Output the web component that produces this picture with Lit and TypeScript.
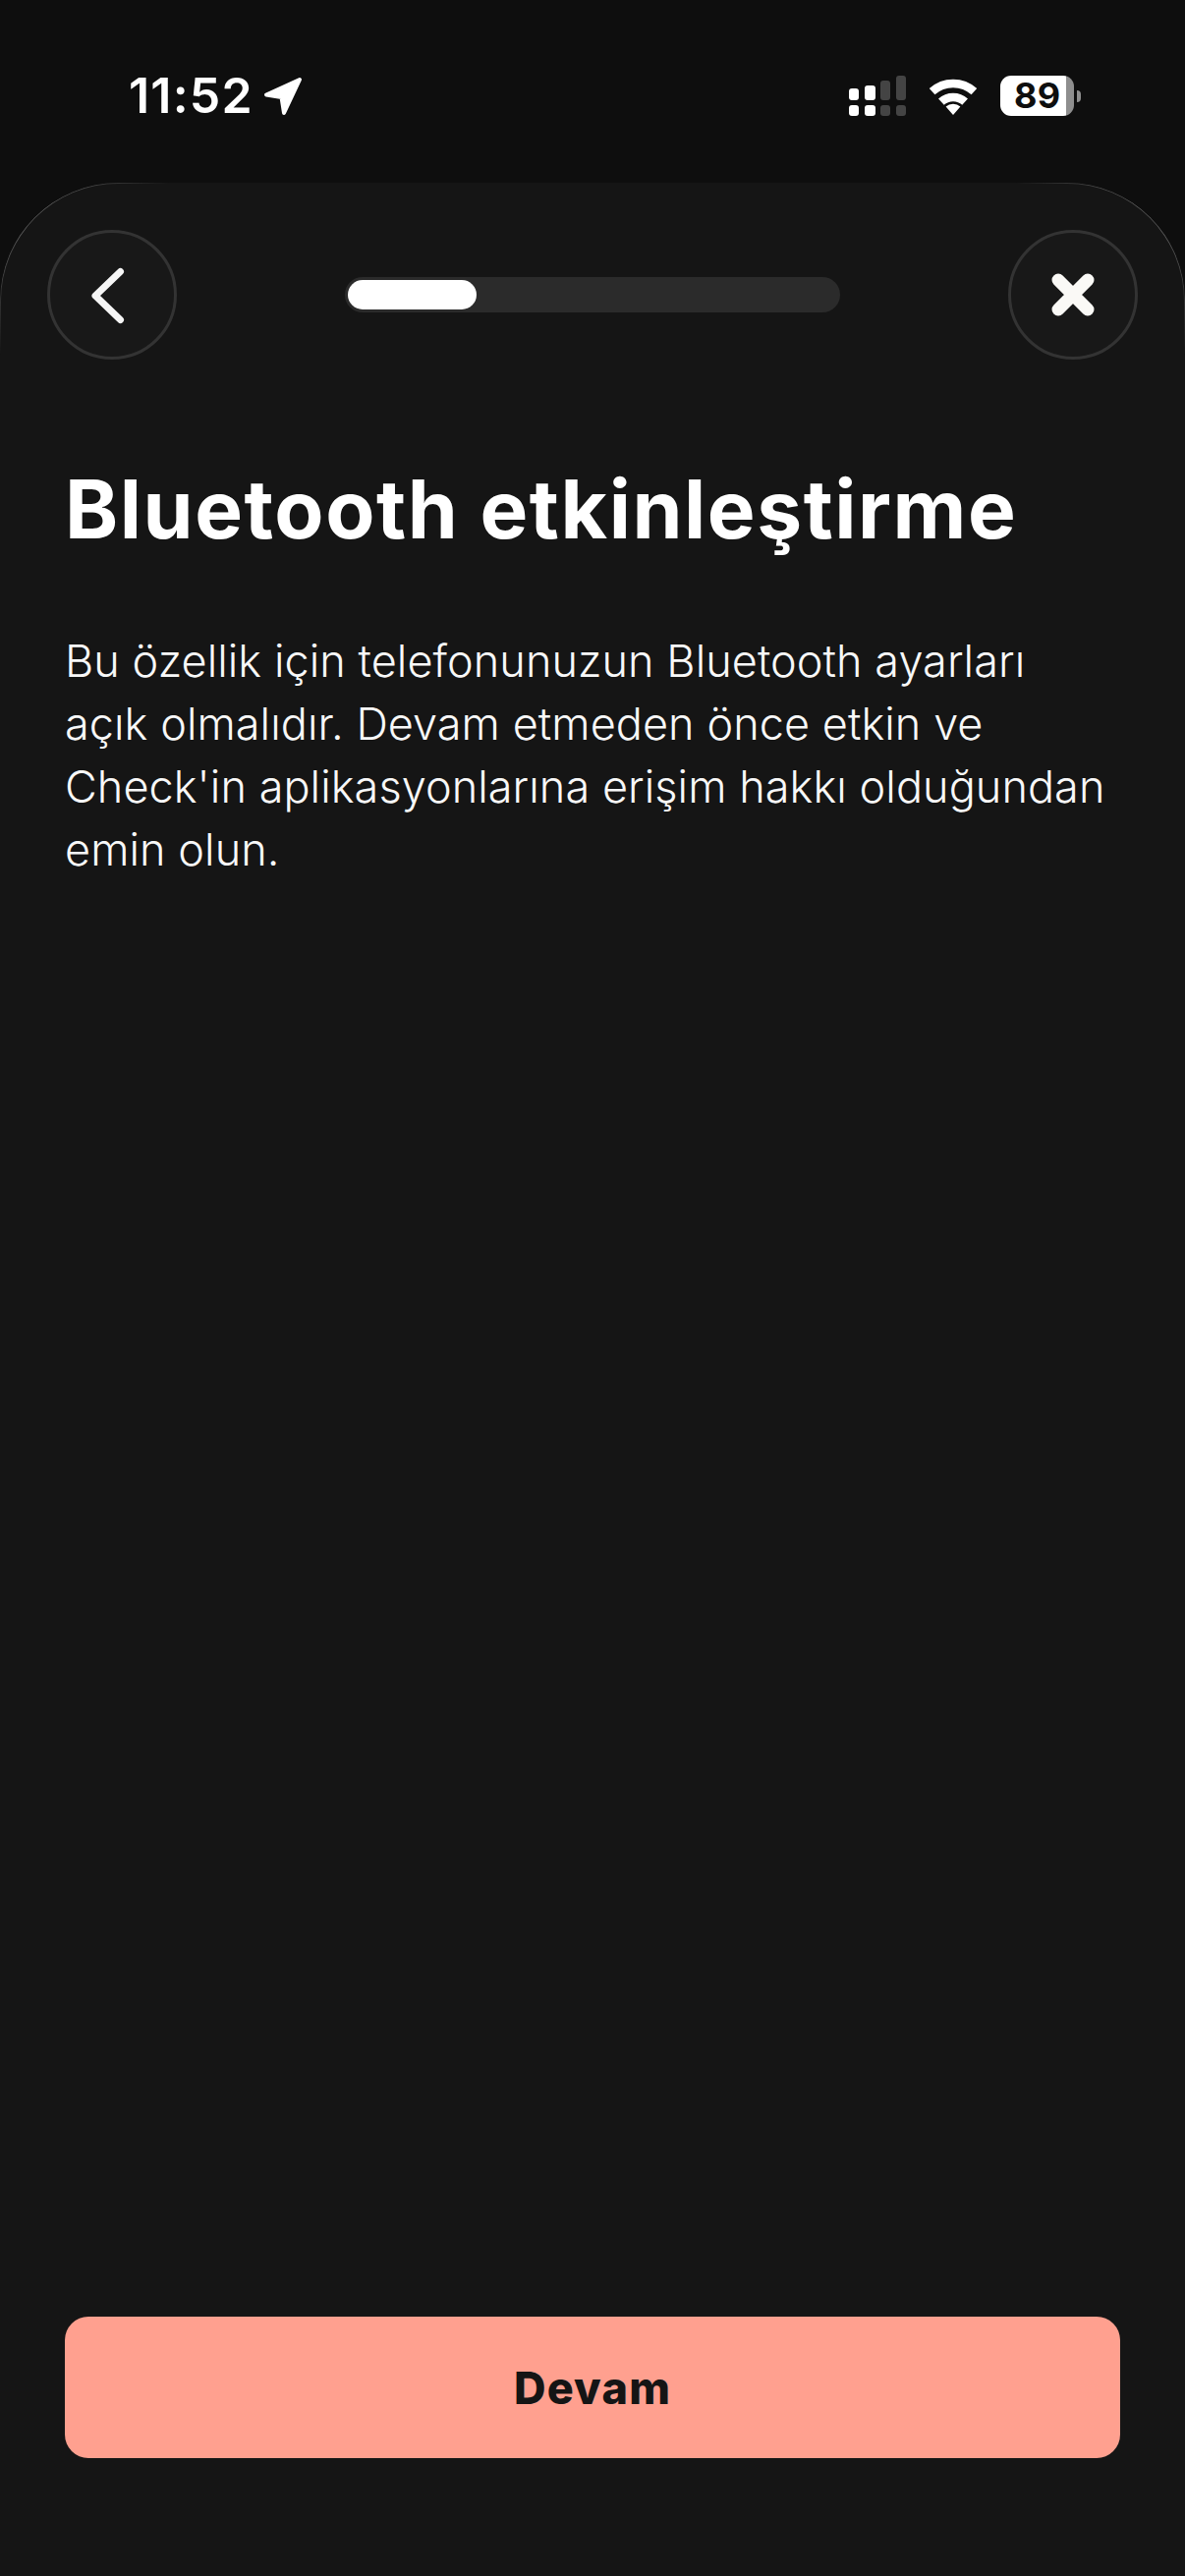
import { LitElement, html, css } from "lit";
import { customElement } from "lit/decorators.js";

@customElement("app-root")
export class AppRoot extends LitElement {
  static styles = css`
    :host {
      display: block;
      width: 1206px;
      height: 2622px;
      background: #0e0e0e;
      font-family: Inter, "Liberation Sans", sans-serif;
      color: #fff;
      overflow: hidden;
    }
    .status {
      height: 186px;
      box-sizing: border-box;
      padding: 77px 106px 0 131px;
      display: flex;
      justify-content: space-between;
      align-items: flex-start;
    }
    .left {
      display: flex;
      align-items: flex-start;
      gap: 10px;
    }
    .time {
      font-size: 50px;
      font-weight: 600;
      line-height: 41px;
      letter-spacing: 1.2px;
      height: 41px;
    }
    .right {
      display: flex;
      align-items: flex-start;
      gap: 23px;
    }
    .right svg,
    .left svg {
      display: block;
    }
    .battery {
      display: flex;
      align-items: center;
      height: 41px;
      gap: 3px;
    }
    .cell {
      width: 75px;
      height: 41px;
      box-sizing: border-box;
      border-radius: 11px;
      background: linear-gradient(to right, #fff 67px, #8e8e8e 67px);
      color: #0e0e0e;
      font-size: 36px;
      font-weight: 700;
      line-height: 41px;
      padding-left: 14px;
      letter-spacing: 0.2px;
    }
    .nub {
      width: 4px;
      height: 12px;
      background: #8e8e8e;
      border-radius: 0 6px 6px 0;
    }
    .sheet {
      position: relative;
      height: 2436px;
      box-sizing: border-box;
      background: #151515;
      border-radius: 120px 120px 0 0;
      padding: 48px 48px 120px;
      display: flex;
      flex-direction: column;
    }
    .sheet::before {
      content: "";
      position: absolute;
      inset: 0;
      height: 260px;
      box-sizing: border-box;
      border: 1px solid #585858;
      border-bottom: none;
      border-radius: 120px 120px 0 0;
      pointer-events: none;
      -webkit-mask-image: linear-gradient(to right, #000 50px, transparent 172px, transparent calc(100% - 172px), #000 calc(100% - 50px)),
        linear-gradient(to bottom, #000 50px, transparent 175px);
      -webkit-mask-composite: source-in;
      mask-composite: intersect;
    }
    .nav {
      display: flex;
      align-items: center;
      justify-content: space-between;
    }
    .circle {
      width: 132px;
      height: 132px;
      box-sizing: border-box;
      border-radius: 50%;
      border: 3px solid #333;
      background: #181818;
      display: flex;
      align-items: center;
      justify-content: center;
      box-shadow: 0 0 14px rgba(255, 255, 255, 0.012);
    }
    .chevron {
      margin: -3px;
    }
    .track {
      width: 504px;
      height: 36px;
      box-sizing: border-box;
      padding: 3px;
      border-radius: 18px;
      background: #2b2b2b;
    }
    .fill {
      height: 30px;
      border-radius: 15px;
      background: #fff;
      width: 131px;
    }
    h1 {
      margin: 105px 0 0 18px;
      font-size: 82px;
      font-weight: 700;
      line-height: 96px;
      letter-spacing: 1.55px;
      white-space: nowrap;
    }
    p {
      margin: 74px 0 0 18px;
      font-size: 45px;
      font-weight: 300;
      line-height: 64px;
      letter-spacing: 0.07px;
      white-space: nowrap;
      color: #f8f8f8;
    }
    .spacer {
      flex: 1;
    }
    .cta {
      margin: 0 18px;
      height: 144px;
      border-radius: 24px;
      background: #ffa08f;
      color: #151515;
      font-size: 45px;
      font-weight: 800;
      letter-spacing: 1.2px;
      display: flex;
      align-items: center;
      justify-content: center;
    }
  `;

  render() {
    return html`
      <div class="status">
        <div class="left">
          <span class="time">11:52</span>
          <svg width="40" height="41" viewBox="0 0 40 41">
            <path d="M37 4 L3 19.5 L18.5 22 L21 38 Z" fill="#fff" stroke="#fff" stroke-width="4" stroke-linejoin="round" />
          </svg>
        </div>
        <div class="right">
          <svg width="58" height="41" viewBox="0 0 58 41">
            <g fill="#fff">
              <rect x="0" y="13" width="10" height="12" rx="3" />
              <rect x="16" y="10" width="11" height="15" rx="3" />
              <rect x="0" y="30" width="10" height="11" rx="3" />
              <rect x="16" y="30" width="11" height="11" rx="3" />
            </g>
            <g fill="#444">
              <rect x="32" y="5" width="10" height="20" rx="3" />
              <rect x="48" y="0" width="10" height="25" rx="3" />
              <rect x="32" y="30" width="10" height="11" rx="3" />
              <rect x="48" y="30" width="10" height="11" rx="3" />
            </g>
          </svg>
          <svg width="50" height="41" viewBox="0 0 50 41">
            <g fill="none" stroke="#fff" stroke-width="8.5">
              <path d="M3.6 16.2 A32 32 0 0 1 46.4 16.2" />
              <path d="M12.9 26.6 A18 18 0 0 1 37.1 26.6" />
            </g>
            <path d="M17.6 31.5 A11 11 0 0 1 32.4 31.5 L25 40 Z" fill="#fff" />
          </svg>
          <div class="battery">
            <div class="cell">89</div>
            <div class="nub"></div>
          </div>
        </div>
      </div>
      <div class="sheet">
        <div class="nav">
          <div class="circle">
            <svg class="chevron" width="132" height="132" viewBox="0 0 132 132">
              <path d="M74.5 42.5 L49 67 L74.5 91.5" fill="none" stroke="#f5f5f5" stroke-width="7" stroke-linecap="round" stroke-linejoin="round" />
            </svg>
          </div>
          <div class="track"><div class="fill"></div></div>
          <div class="circle">
            <svg width="48" height="48" viewBox="0 0 48 48">
              <path d="M9 9 L39 39 M39 9 L9 39" fill="none" stroke="#faf9f6" stroke-width="13" stroke-linecap="round" />
            </svg>
          </div>
        </div>
        <h1>Bluetooth etkinleştirme</h1>
        <p>Bu özellik için telefonunuzun Bluetooth ayarları<br />açık olmalıdır. Devam etmeden önce etkin ve<br />Check'in aplikasyonlarına erişim hakkı olduğundan<br />emin olun.</p>
        <div class="spacer"></div>
        <div class="cta">Devam</div>
      </div>
    `;
  }
}
